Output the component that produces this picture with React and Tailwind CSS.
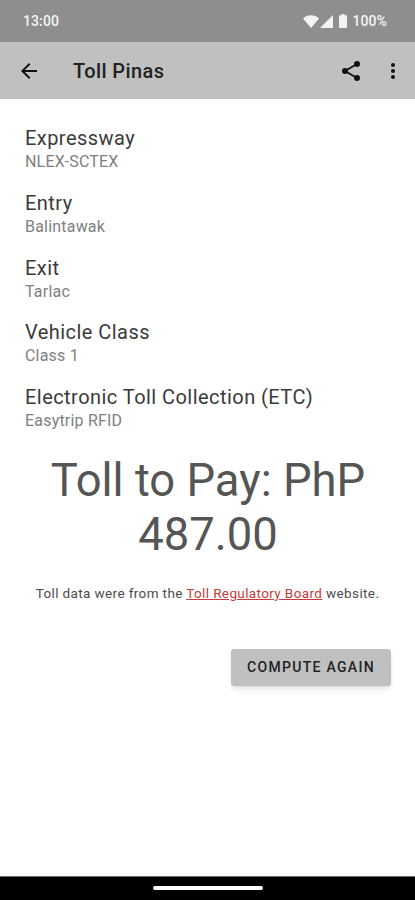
const details = [
  { label: 'Expressway', value: 'NLEX-SCTEX' },
  { label: 'Entry', value: 'Balintawak' },
  { label: 'Exit', value: 'Tarlac' },
  { label: 'Vehicle Class', value: 'Class 1' },
  { label: 'Electronic Toll Collection (ETC)', value: 'Easytrip RFID' },
]

function StatusBar() {
  return (
    <div className="h-[42px] shrink-0 bg-[#8e8e8e] flex items-center justify-between pl-[23px] pr-[28px] text-[#f4f4f4] text-[14px] font-medium tracking-[0.1px]">
      <span>13:00</span>
      <div className="flex items-center">
        <svg width="16" height="13" viewBox="0 0 16 13" fill="currentColor"><path d="M8 13 0 3.500C4.500-.9 11.500-.9 16 3.500z" /></svg>
        <svg className="ml-px" width="13" height="13" viewBox="0 0 13 13" fill="currentColor"><path d="M13 0v13H0z" /></svg>
        <svg className="ml-1.5 mr-[5px]" width="8" height="14" viewBox="0 0 8 14" fill="currentColor"><path d="M2.500 0h3v1.300H7q1 0 1 1V13q0 1-1 1H1q-1 0-1-1V2.300q0-1 1-1h1.500z" /></svg>
        <span>100%</span>
      </div>
    </div>
  )
}

function AppBar() {
  return (
    <header className="h-[57px] shrink-0 bg-[#c0c0c0] flex items-center pl-[17px] pr-[10px] text-[#111]">
      <svg width="24" height="24" viewBox="0 0 24 24" fill="currentColor"><path d="M20 11H7.830l5.590-5.590L12 4l-8 8 8 8 1.410-1.410L7.830 13H20v-2z" /></svg>
      <h1 className="ml-[32px] pt-px flex-1 text-[20px] font-medium tracking-[0.4px] text-[#222]">Toll Pinas</h1>
      <svg width="24" height="24" viewBox="0 0 24 24" fill="currentColor">
        <path d="M18 5 6 12l12 7" fill="none" stroke="currentColor" strokeWidth="1.800" />
        <circle cx="18" cy="5" r="3" />
        <circle cx="6" cy="12" r="3" />
        <circle cx="18" cy="19" r="3" />
      </svg>
      <svg className="ml-[18px]" width="24" height="24" viewBox="0 0 24 24" fill="currentColor"><circle cx="12" cy="6" r="2" /><circle cx="12" cy="12" r="2" /><circle cx="12" cy="18" r="2" /></svg>
    </header>
  )
}

export default function App() {
  return (
    <div className="h-[900px] w-[415px] bg-white flex flex-col font-[Roboto,sans-serif]">
      <StatusBar />
      <AppBar />
      <main className="flex-1 flex flex-col pt-[27px]">
        {details.map(d => (
          <div key={d.label} className="h-[64.8px] pl-[25px]">
            <div className="text-[20px] leading-[25px] tracking-[0.45px] text-[#3a3a3a]">{d.label}</div>
            <div className="text-[16px] leading-[22px] tracking-[0.2px] text-[#808080]">{d.value}</div>
          </div>
        ))}
        <p className="mt-[4px] pl-[33px] pr-8 text-center text-[45.4px] leading-[54px] text-[#555]">Toll to Pay: PhP 487.00</p>
        <p className="mt-[21px] text-center text-[13.5px] leading-[20px] tracking-[0.38px] text-[#4c4c4c] whitespace-nowrap">
          Toll data were from the <a className="text-[#c43c3c] underline">Toll Regulatory Board</a> website.
        </p>
        <button className="mt-[46px] mr-[24px] self-end w-[160px] h-[37px] rounded-[3px] bg-[#c0c0c0] shadow-md text-[14px] font-medium tracking-[1.300px] text-[#222]">
          COMPUTE AGAIN
        </button>
      </main>
      <footer className="h-[24px] shrink-0 border-t border-[#666] bg-black flex items-center justify-center pb-px">
        <div className="w-[110px] h-[4px] rounded-full bg-white" />
      </footer>
    </div>
  )
}
